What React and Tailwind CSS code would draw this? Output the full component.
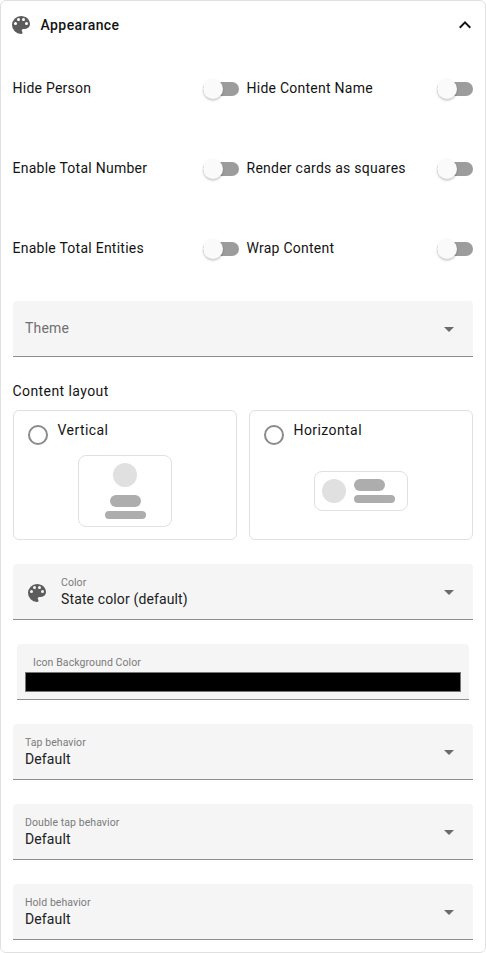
import React from 'react';

const PALETTE =
  'M17.5,12A1.5,1.5 0 0,1 16,10.5A1.5,1.5 0 0,1 17.5,9A1.5,1.5 0 0,1 19,10.5A1.5,1.5 0 0,1 17.5,12M14.5,8A1.5,1.5 0 0,1 13,6.5A1.5,1.5 0 0,1 14.5,5A1.5,1.5 0 0,1 16,6.5A1.5,1.5 0 0,1 14.5,8M9.5,8A1.5,1.5 0 0,1 8,6.5A1.5,1.5 0 0,1 9.5,5A1.5,1.5 0 0,1 11,6.5A1.5,1.5 0 0,1 9.5,8M6.5,12A1.5,1.5 0 0,1 5,10.5A1.5,1.5 0 0,1 6.5,9A1.5,1.5 0 0,1 8,10.5A1.5,1.5 0 0,1 6.5,12M12,3A9,9 0 0,0 3,12A9,9 0 0,0 12,21A1.5,1.5 0 0,0 13.5,19.5C13.5,19.11 13.35,18.76 13.11,18.5C12.88,18.23 12.73,17.88 12.73,17.5A1.5,1.5 0 0,1 14.23,16H16A5,5 0 0,0 21,11C21,6.58 16.97,3 12,3Z';

function Icon({ d, className }) {
  return (
    <svg viewBox="0 0 24 24" className={`size-6 shrink-0 ${className}`} fill="currentColor">
      <path d={d} />
    </svg>
  );
}

function Toggle({ label }) {
  return (
    <div className="flex h-14 items-center justify-between">
      <span className="-ml-[0.5px] pb-0.5 tracking-[0.25px]">{label}</span>
      <span className="flex h-3.5 w-9 items-center rounded-full bg-[#9c9c9c]">
        <span className="size-5 rounded-full bg-[#fafafa] shadow-[0_2px_2px_rgba(0,0,0,0.13),0_1px_3px_rgba(0,0,0,0.1)]" />
      </span>
    </div>
  );
}

function Field({ label, value, icon }) {
  return (
    <div className="flex h-14 items-center rounded-t border-b border-[#8e8e8e] bg-[#f5f5f5] px-3">
      {icon && <Icon d={icon} className="mt-0.5 mr-3 text-[#5c5c5c]" />}
      <div className="flex flex-1 flex-col">
        {value ? (
          <>
            <span className="mt-0.5 text-[10.5px] leading-3 tracking-[0.07px] text-[#7a7a7a]">{label}</span>
            <span className="leading-5 tracking-[0.13px] text-[#212121]">{value}</span>
          </>
        ) : (
          <span className="pb-0.5 leading-5 tracking-[0.2px] text-[#707070]">{label}</span>
        )}
      </div>
      <Icon d="M7,10L12,15L17,10H7Z" className="text-[#6b6b6b]" />
    </div>
  );
}

function LayoutCard({ label, children }) {
  return (
    <div className="flex h-[130px] flex-col rounded-md border border-[#e0e0e0] px-3.5 pt-2.5">
      <div className="flex h-[34px] gap-2.5">
        <span className="mt-1 size-5 rounded-full border-2 border-[#8a8a8a]" />
        <span className="-mt-px -ml-[0.5px] leading-5 tracking-[0.42px]">{label}</span>
      </div>
      <div className="flex h-[72px] items-center justify-center">{children}</div>
    </div>
  );
}

export default function App() {
  return (
    <div className="flex h-[953px] w-[486px] flex-col rounded-md border border-[#e0e0e0] bg-white font-[Roboto,sans-serif] text-sm text-[#141414]">
      <div className="flex h-12 items-center px-2">
        <Icon d={PALETTE} className="text-[#5c5c5c]" />
        <span className="ml-[7.5px] flex-1 font-medium tracking-[0.42px]">Appearance</span>
        <Icon d="M7.41,15.41L12,10.83L16.59,15.41L18,14L12,8L6,14L7.41,15.41Z" className="text-[#141414]" />
      </div>
      <div className="flex flex-col gap-6 p-3">
        <div className="grid grid-cols-2 gap-x-2 gap-y-6">
          <Toggle label="Hide Person" />
          <Toggle label="Hide Content Name" />
          <Toggle label="Enable Total Number" />
          <Toggle label="Render cards as squares" />
          <Toggle label="Enable Total Entities" />
          <Toggle label="Wrap Content" />
        </div>
        <Field label="Theme" />
        <div>
          <div className="-ml-[0.5px] h-[29px] leading-5 tracking-[0.42px]">Content layout</div>
          <div className="grid grid-cols-2 gap-3">
            <LayoutCard label="Vertical">
              <div className="flex h-[72px] w-[94px] flex-col items-center rounded-lg border border-[#e0e0e0] pt-[7px]">
                <div className="size-6 rounded-full bg-[#e0e0e0]" />
                <div className="mt-2 h-3 w-[31px] rounded-full bg-[#adadad]" />
                <div className="mt-1 h-2 w-[41px] rounded-full bg-[#adadad]" />
              </div>
            </LayoutCard>
            <LayoutCard label="Horizontal">
              <div className="flex h-10 w-[94px] items-center gap-2 rounded-lg border border-[#e0e0e0] pl-[7px]">
                <div className="size-6 rounded-full bg-[#e0e0e0]" />
                <div className="flex flex-col gap-1">
                  <div className="h-3 w-[31px] rounded-full bg-[#adadad]" />
                  <div className="h-2 w-[41px] rounded-full bg-[#adadad]" />
                </div>
              </div>
            </LayoutCard>
          </div>
        </div>
        <Field label="Color" value="State color (default)" icon={PALETTE} />
        <div className="mx-1 flex h-14 flex-col rounded-t border-b border-[#8e8e8e] bg-[#f5f5f5] px-2 pt-[13px]">
          <span className="ml-2 text-[10.5px] leading-3 tracking-[0.09px] text-[#7a7a7a]">Icon Background Color</span>
          <div className="mt-[3px] h-5 border border-[#767676] bg-black" />
        </div>
        <Field label="Tap behavior" value="Default" />
        <Field label="Double tap behavior" value="Default" />
        <Field label="Hold behavior" value="Default" />
      </div>
    </div>
  );
}
